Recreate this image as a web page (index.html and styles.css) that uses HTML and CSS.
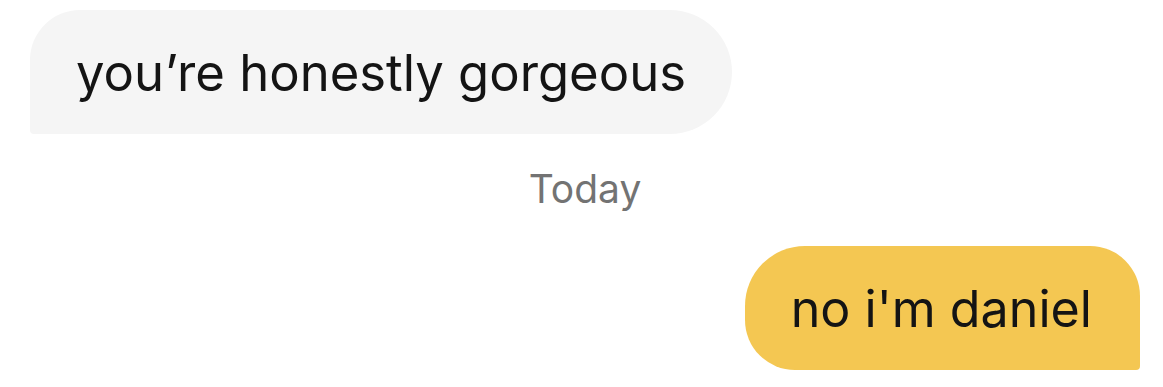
FILE: index.html
```html
<!DOCTYPE html>
<html lang="en">
<head>
<meta charset="utf-8">
<title>Chat</title>
<link rel="stylesheet" href="styles.css">
</head>
<body>
<main class="chat">
  <div class="row row-in">
    <div class="bubble bubble-in">you’re honestly gorgeous</div>
  </div>
  <div class="day">Today</div>
  <div class="row row-out">
    <div class="bubble bubble-out">no i'm daniel</div>
  </div>
</main>
</body>
</html>
```
FILE: styles.css
```css
html, body {
  margin: 0;
  padding: 0;
  background: #ffffff;
}
.chat {
  width: 1163px;
  height: 387px;
  box-sizing: border-box;
  padding: 10px 23px 0 30px;
  display: flex;
  flex-direction: column;
  font-family: "Inter", "Liberation Sans", sans-serif;
}
.row {
  display: flex;
}
.row-out {
  justify-content: flex-end;
}
.bubble {
  height: 124px;
  box-sizing: border-box;
  display: flex;
  align-items: center;
  color: #141414;
  white-space: nowrap;
}
.bubble-in {
  font-size: 50.8px;
  background: #f5f5f5;
  border-radius: 50px 62px 62px 4px;
  padding: 0 46px 0 46px;
}
.bubble-out {
  font-size: 50.2px;
  background: #f4c752;
  border-radius: 60px 50px 4px 50px;
  padding: 0 48px 0 46px;
}
.day {
  text-align: center;
  font-size: 39px;
  color: #737373;
  margin: 31px 0 0;
  height: 81px;
}
```
